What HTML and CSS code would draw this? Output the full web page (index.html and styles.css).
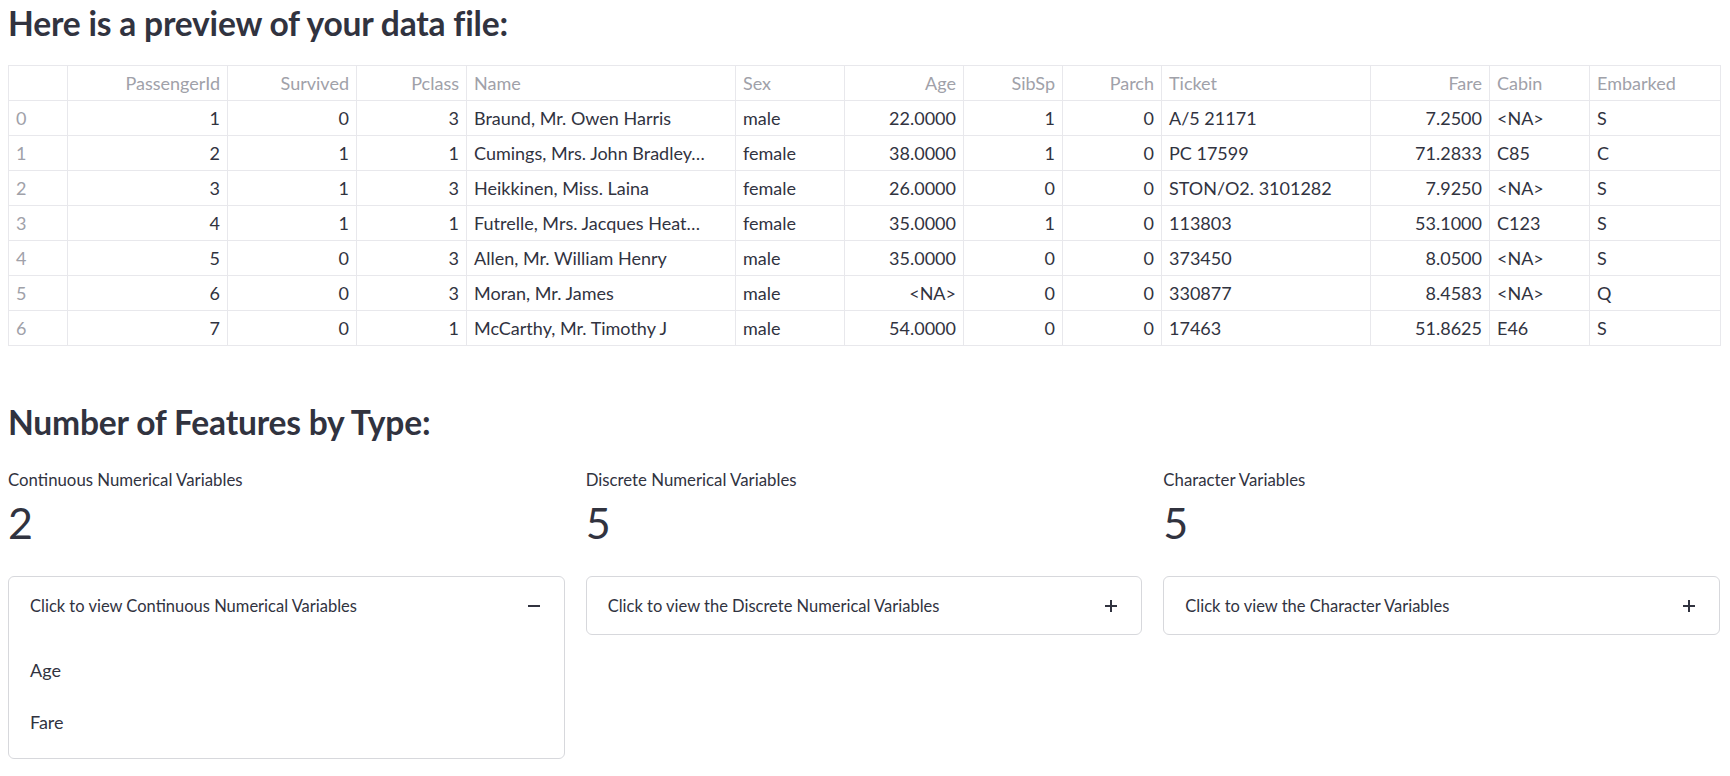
FILE: index.html
```html
<!DOCTYPE html>
<html>
<head>
<meta charset="utf-8">
<link rel="stylesheet" href="styles.css">
</head>
<body>
<main class="page">
  <h2 class="title">Here is a preview of your data file:</h2>
  <table class="grid">
    <colgroup>
      <col class="c-idx"><col class="c-pid"><col class="c-surv"><col class="c-pcl"><col class="c-name"><col class="c-sex"><col class="c-age"><col class="c-sib"><col class="c-par"><col class="c-tic"><col class="c-fare"><col class="c-cab"><col class="c-emb">
    </colgroup>
    <thead>
      <tr>
        <th></th><th class="r">PassengerId</th><th class="r">Survived</th><th class="r">Pclass</th><th>Name</th><th>Sex</th><th class="r">Age</th><th class="r">SibSp</th><th class="r">Parch</th><th>Ticket</th><th class="r">Fare</th><th>Cabin</th><th>Embarked</th>
      </tr>
    </thead>
    <tbody>
      <tr><td class="idx">0</td><td class="r">1</td><td class="r">0</td><td class="r">3</td><td>Braund, Mr. Owen Harris</td><td>male</td><td class="r">22.0000</td><td class="r">1</td><td class="r">0</td><td>A/5 21171</td><td class="r">7.2500</td><td>&lt;NA&gt;</td><td>S</td></tr>
      <tr><td class="idx">1</td><td class="r">2</td><td class="r">1</td><td class="r">1</td><td>Cumings, Mrs. John Bradley…</td><td>female</td><td class="r">38.0000</td><td class="r">1</td><td class="r">0</td><td>PC 17599</td><td class="r">71.2833</td><td>C85</td><td>C</td></tr>
      <tr><td class="idx">2</td><td class="r">3</td><td class="r">1</td><td class="r">3</td><td>Heikkinen, Miss. Laina</td><td>female</td><td class="r">26.0000</td><td class="r">0</td><td class="r">0</td><td>STON/O2. 3101282</td><td class="r">7.9250</td><td>&lt;NA&gt;</td><td>S</td></tr>
      <tr><td class="idx">3</td><td class="r">4</td><td class="r">1</td><td class="r">1</td><td>Futrelle, Mrs. Jacques Heat…</td><td>female</td><td class="r">35.0000</td><td class="r">1</td><td class="r">0</td><td>113803</td><td class="r">53.1000</td><td>C123</td><td>S</td></tr>
      <tr><td class="idx">4</td><td class="r">5</td><td class="r">0</td><td class="r">3</td><td>Allen, Mr. William Henry</td><td>male</td><td class="r">35.0000</td><td class="r">0</td><td class="r">0</td><td>373450</td><td class="r">8.0500</td><td>&lt;NA&gt;</td><td>S</td></tr>
      <tr><td class="idx">5</td><td class="r">6</td><td class="r">0</td><td class="r">3</td><td>Moran, Mr. James</td><td>male</td><td class="r">&lt;NA&gt;</td><td class="r">0</td><td class="r">0</td><td>330877</td><td class="r">8.4583</td><td>&lt;NA&gt;</td><td>Q</td></tr>
      <tr><td class="idx">6</td><td class="r">7</td><td class="r">0</td><td class="r">1</td><td>McCarthy, Mr. Timothy J</td><td>male</td><td class="r">54.0000</td><td class="r">0</td><td class="r">0</td><td>17463</td><td class="r">51.8625</td><td>E46</td><td>S</td></tr>
    </tbody>
  </table>

  <h2 class="section">Number of Features by Type:</h2>

  <div class="cols">
    <div class="col">
      <div class="metric">
        <div class="m-label">Continuous Numerical Variables</div>
        <div class="m-value">2</div>
      </div>
      <div class="exp">
        <div class="exp-head"><span>Click to view Continuous Numerical Variables</span><span class="ico minus"></span></div>
        <div class="exp-body">
          <p>Age</p>
          <p>Fare</p>
        </div>
      </div>
    </div>
    <div class="col">
      <div class="metric">
        <div class="m-label">Discrete Numerical Variables</div>
        <div class="m-value">5</div>
      </div>
      <div class="exp">
        <div class="exp-head"><span>Click to view the Discrete Numerical Variables</span><span class="ico plus"></span></div>
      </div>
    </div>
    <div class="col">
      <div class="metric">
        <div class="m-label">Character Variables</div>
        <div class="m-value">5</div>
      </div>
      <div class="exp">
        <div class="exp-head"><span>Click to view the Character Variables</span><span class="ico plus"></span></div>
      </div>
    </div>
  </div>
</main>
</body>
</html>
```

FILE: styles.css
```css
html, body {
  margin: 0;
  padding: 0;
  background: #ffffff;
}
body {
  font-family: "Source Sans Pro", Lato, "Noto Sans", sans-serif;
  color: #31333f;
}
.page {
  padding: 0 10px 0 8px;
}
.title, .section {
  margin: 0;
  font-weight: 700;
  font-size: 33.6px;
  line-height: 1.2;
  letter-spacing: -0.2px;
  color: #31333f;
}
.title {
  padding-top: 3px;
  height: 62px;
}
.grid {
  width: 1712px;
  border-collapse: collapse;
  table-layout: fixed;
  font-size: 18px;
}
.c-idx { width: 59px; }
.c-pid { width: 160px; }
.c-surv { width: 129px; }
.c-pcl { width: 110px; }
.c-name { width: 269px; }
.c-sex { width: 109px; }
.c-age { width: 119px; }
.c-sib { width: 99px; }
.c-par { width: 99px; }
.c-tic { width: 209px; }
.c-fare { width: 119px; }
.c-cab { width: 100px; }
.c-emb { width: 131px; }
.grid th, .grid td {
  border: 1px solid #e8e8ec;
  height: 34px;
  padding: 0 7px;
  text-align: left;
  white-space: nowrap;
  overflow: hidden;
  font-weight: 400;
}
.grid th {
  color: #a0a1a9;
}
.grid td.idx {
  color: #a0a1a9;
}
.grid .r {
  text-align: right;
}
.section {
  margin-top: 56px;
}
.cols {
  display: grid;
  grid-template-columns: 1fr 1fr 1fr;
  column-gap: 21px;
  margin-top: 28px;
}
.metric {
  height: 106px;
}
.m-label {
  font-size: 16.8px;
  line-height: 20px;
}
.m-value {
  font-size: 43px;
  line-height: 56px;
  margin-top: 5px;
}
.exp {
  border: 1px solid #d7d8dc;
  border-radius: 6px;
}
.exp-head {
  height: 57px;
  display: flex;
  align-items: center;
  justify-content: space-between;
  padding: 0 24px 0 21px;
  font-size: 16.5px;
}
.ico {
  position: relative;
  width: 12px;
  height: 12px;
}
.ico::before, .ico::after {
  content: "";
  position: absolute;
  background: #31333f;
}
.ico::before {
  left: 0;
  top: 5px;
  width: 12px;
  height: 2px;
}
.plus::after {
  left: 5px;
  top: 0;
  width: 2px;
  height: 12px;
}
.minus::after {
  display: none;
}
.exp-body {
  padding: 10px 21px 10px;
  font-size: 18px;
}
.exp-body p {
  margin: 0;
  line-height: 52px;
}
```
